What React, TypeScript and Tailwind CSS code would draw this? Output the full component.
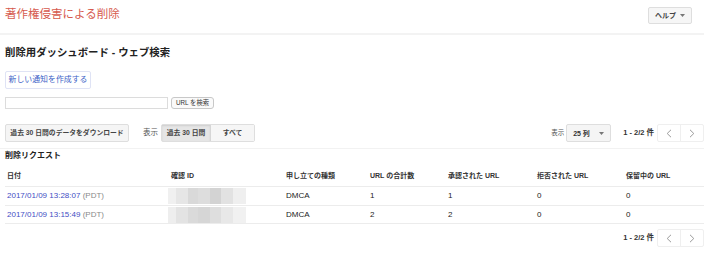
import React from "react";

const font = { fontFamily: '"Liberation Sans", Arial, "Noto Sans CJK JP", sans-serif' };

function Chevron({ dir }: { dir: "l" | "r" }) {
  return (
    <svg width="6" height="9" viewBox="0 0 6 9" fill="none">
      {dir === "l" ? (
        <path d="M5 0.8 L1.2 4.5 L5 8.2" stroke="#9a9a9a" strokeWidth="1" />
      ) : (
        <path d="M1 0.8 L4.8 4.5 L1 8.2" stroke="#9a9a9a" strokeWidth="1" />
      )}
    </svg>
  );
}

function Caret() {
  return (
    <svg width="5" height="3" viewBox="0 0 5 3">
      <path d="M0 0 L5 0 L2.5 3 Z" fill="#777" />
    </svg>
  );
}

function Pager() {
  return (
    <div className="flex items-center">
      <span className="text-[7.5px] font-bold text-[#333] mr-[3px]">1 - 2/2 件</span>
      <div className="flex h-[18px] border border-[#efefef] rounded-[2px]">
        <div className="w-[23px] flex items-center justify-center border-r border-[#efefef]">
          <Chevron dir="l" />
        </div>
        <div className="w-[22px] flex items-center justify-center">
          <Chevron dir="r" />
        </div>
      </div>
    </div>
  );
}

function Blur({ variant }: { variant: number }) {
  const a = ["#f0f0f0", "#e6e6e6", "#d9d9d9", "#dddddd", "#d3d3d3", "#e2e2e2", "#efefef"];
  const b = ["#eeeeee", "#e3e3e3", "#dadada", "#d6d6d6", "#dedede", "#e8e8e8", "#f1f1f1"];
  const c = variant === 0 ? a : b;
  const w = [8, 12, 10, 12, 11, 12, 13];
  return (
    <div className="flex h-[16px] ml-[-3px]">
      {c.map((col, i) => (
        <div key={i} style={{ background: col, width: w[i] }} />
      ))}
    </div>
  );
}

const cols = "grid grid-cols-[166px_115px_84px_78px_89px_89px_1fr]";

export default function App() {
  const rows = [
    { date: "2017/01/09 13:28:07", total: "1", ok: "1", ng: "0", pend: "0" },
    { date: "2017/01/09 13:15:49", total: "2", ok: "2", ng: "0", pend: "0" },
  ];
  return (
    <div style={font} className="w-[714px] h-[258px] bg-white overflow-hidden text-[#222]">
      <div className="w-[704px]">
        {/* header */}
        <div className="h-[35px] flex items-center justify-between pl-[5px] pr-[12px] border-b-[2px] border-[#f3f3f3]">
          <div className="text-[11.5px] text-[#d65a4e] leading-none mb-[3px]">著作権侵害による削除</div>
          <div className="w-[44px] h-[17px] mb-[2px] flex items-center justify-between pl-[6px] pr-[6px] bg-[#f6f6f6] border border-[#dedede] rounded-[2px]">
            <span className="text-[7px] font-bold text-[#444] leading-none">ヘルプ</span>
            <Caret />
          </div>
        </div>

        <div className="pl-[5px]">
          <div className="mt-[11px] h-[14px] flex items-center text-[10.4px] font-bold text-[#222] leading-none">
            削除用ダッシュボード - ウェブ検索
          </div>

          <div className="mt-[11px] w-[86px] h-[18px] flex items-center justify-center border border-[#dfe3f5] rounded-[2px] text-[7.9px] text-[#3d5fc7] leading-none">
            新しい通知を作成する
          </div>

          <div className="mt-[8px] flex items-center gap-[3px]">
            <div className="w-[163px] h-[12px] border border-[#dcdcdc] bg-white" />
            <div className="w-[43px] h-[12px] flex items-center justify-center border border-[#c8c8c8] rounded-[3px] bg-[#fafafa] text-[6.3px] text-[#333] leading-none">
              URL を検索
            </div>
          </div>
        </div>

        {/* toolbar */}
        <div className="mt-[15px] pl-[5px] pb-[6px] border-b border-[#f2f2f2] flex items-center justify-between">
          <div className="flex items-center">
            <div className="w-[124px] h-[18px] flex items-center justify-center bg-[#f5f5f5] border border-[#dedede] rounded-[2px] text-[6.8px] font-bold text-[#444] leading-none">
              過去 30 日間のデータをダウンロード
            </div>
            <span className="ml-[14px] text-[7.5px] text-[#555] leading-none">表示</span>
            <div className="ml-[3px] flex h-[18px] border border-[#dedede] rounded-[2px]">
              <div className="w-[49px] flex items-center justify-center bg-[#e6e6e6] shadow-[inset_0_1px_2px_rgba(0,0,0,0.1)] border-r border-[#d6d6d6] text-[6.8px] font-bold text-[#444] leading-none">
                過去 30 日間
              </div>
              <div className="w-[43px] flex items-center justify-center bg-[#f6f6f6] text-[6.8px] font-bold text-[#444] leading-none">
                すべて
              </div>
            </div>
          </div>
          <div className="flex items-center">
            <span className="text-[6.5px] text-[#555] leading-none mr-[2px]">表示</span>
            <div className="w-[45px] h-[18px] flex items-center justify-between pl-[6px] pr-[6px] bg-[#f5f5f5] border border-[#dedede] rounded-[2px]">
              <span className="text-[7px] font-bold text-[#333] leading-none">25 列</span>
              <Caret />
            </div>
            <div className="ml-[12px]">
              <Pager />
            </div>
          </div>
        </div>

        <div className="pl-[5px] h-[14px] flex items-center text-[8px] font-bold text-[#222] leading-none">
          削除リクエスト
        </div>

        {/* table */}
        <div className="ml-[5px]">
          <div className={`${cols} h-[24px] items-center pt-[4px] border-b border-[#ececec] text-[7px] font-bold text-[#333]`}>
            <div className="pl-[2px]">日付</div>
            <div>確認 ID</div>
            <div>申し立ての種類</div>
            <div>URL の合計数</div>
            <div>承認された URL</div>
            <div>拒否された URL</div>
            <div>保留中の URL</div>
          </div>
          {rows.map((r, i) => (
            <div key={i} className={`${cols} ${i === 0 ? "h-[19px]" : "h-[18px]"} items-center border-b border-[#ececec] text-[8px] text-[#222]`}>
              <div className="pl-[2px] leading-none">
                <span className="text-[#3f4ec4]">{r.date}</span>{" "}
                <span className="text-[#8a8a8a]">(PDT)</span>
              </div>
              <div>
                <Blur variant={i} />
              </div>
              <div>DMCA</div>
              <div>{r.total}</div>
              <div>{r.ok}</div>
              <div>{r.ng}</div>
              <div>{r.pend}</div>
            </div>
          ))}
        </div>

        <div className="mt-[5px] flex justify-end">
          <Pager />
        </div>
      </div>
    </div>
  );
}
